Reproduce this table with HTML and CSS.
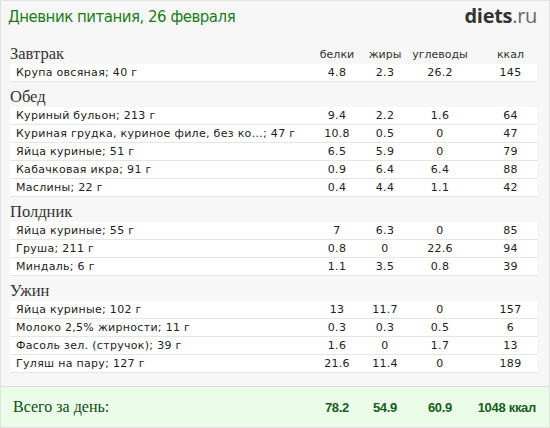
FILE: index.html
```html
<!DOCTYPE html>
<html lang="ru">
<head>
<meta charset="utf-8">
<link rel="stylesheet" href="styles.css">
</head>
<body>
<div class="widget">
  <div class="top">
    <div class="title">Дневник питания, 26 февраля</div>
    <div class="logo"><b>diets</b>.ru</div>
  </div>

  <div class="meal">
    <div class="head"><span class="mname">Завтрак</span><span>белки</span><span>жиры</span><span>углеводы</span><span class="last">ккал</span></div>
    <div class="row"><span class="name">Крупа овсяная; 40 г</span><span>4.8</span><span>2.3</span><span>26.2</span><span class="last">145</span></div>
  </div>

  <div class="meal">
    <div class="head"><span class="mname">Обед</span></div>
    <div class="row"><span class="name">Куриный бульон; 213 г</span><span>9.4</span><span>2.2</span><span>1.6</span><span class="last">64</span></div>
    <div class="row"><span class="name">Куриная грудка, куриное филе, без ко...; 47 г</span><span>10.8</span><span>0.5</span><span>0</span><span class="last">47</span></div>
    <div class="row"><span class="name">Яйца куриные; 51 г</span><span>6.5</span><span>5.9</span><span>0</span><span class="last">79</span></div>
    <div class="row"><span class="name">Кабачковая икра; 91 г</span><span>0.9</span><span>6.4</span><span>6.4</span><span class="last">88</span></div>
    <div class="row"><span class="name">Маслины; 22 г</span><span>0.4</span><span>4.4</span><span>1.1</span><span class="last">42</span></div>
  </div>

  <div class="meal">
    <div class="head"><span class="mname">Полдник</span></div>
    <div class="row"><span class="name">Яйца куриные; 55 г</span><span>7</span><span>6.3</span><span>0</span><span class="last">85</span></div>
    <div class="row"><span class="name">Груша; 211 г</span><span>0.8</span><span>0</span><span>22.6</span><span class="last">94</span></div>
    <div class="row"><span class="name">Миндаль; 6 г</span><span>1.1</span><span>3.5</span><span>0.8</span><span class="last">39</span></div>
  </div>

  <div class="meal">
    <div class="head"><span class="mname">Ужин</span></div>
    <div class="row"><span class="name">Яйца куриные; 102 г</span><span>13</span><span>11.7</span><span>0</span><span class="last">157</span></div>
    <div class="row"><span class="name">Молоко 2,5% жирности; 11 г</span><span>0.3</span><span>0.3</span><span>0.5</span><span class="last">6</span></div>
    <div class="row"><span class="name">Фасоль зел. (стручок); 39 г</span><span>1.6</span><span>0</span><span>1.7</span><span class="last">13</span></div>
    <div class="row"><span class="name">Гуляш на пару; 127 г</span><span>21.6</span><span>11.4</span><span>0</span><span class="last">189</span></div>
  </div>

  <div class="total">
    <span class="tname">Всего за день:</span><span>78.2</span><span>54.9</span><span>60.9</span><span class="last">1048 ккал</span>
  </div>
</div>
</body>
</html>
```

FILE: styles.css
```css
html, body {
  margin: 0;
  padding: 0;
  background: #fff;
}

.widget {
  width: 550px;
  height: 428px;
  box-sizing: border-box;
  border: 1px solid #e2e2e2;
  background: #f7f7f7;
  display: flex;
  flex-direction: column;
  font-family: "DejaVu Sans", Verdana, sans-serif;
}

.top {
  height: 38px;
  display: flex;
  justify-content: space-between;
  align-items: flex-start;
  padding: 0 12px 0 7px;
}

.title {
  font-size: 15px;
  color: #1a7d1a;
  line-height: 20px;
  padding-top: 6px;
  letter-spacing: -0.5px;
}

.logo {
  font-family: "Open Sans", sans-serif;
  font-size: 20px;
  color: #666;
  line-height: 24px;
  padding-top: 3px;
  letter-spacing: -0.3px;
}

.logo b {
  color: #333;
  font-weight: 700;
}

.meal {
  display: flex;
  flex-direction: column;
  padding: 0 12px 0 9px;
}

.head,
.row,
.total {
  display: grid;
  grid-template-columns: 1fr 48px 48px 62px 66px;
  align-items: center;
}

.head > span,
.row > span,
.total > span {
  text-align: center;
  white-space: nowrap;
}

.head > .last,
.row > .last {
  padding-left: 13px;
}

.total > .last {
  text-align: right;
  padding-right: 1px;
}

.head {
  height: 25px;
  align-items: end;
  font-size: 11px;
  color: #333;
  line-height: 18px;
}

.head > .mname {
  text-align: left;
  font-family: "Liberation Serif", "DejaVu Serif", serif;
  font-size: 16.5px;
  color: #333;
  line-height: 20px;
}

.row {
  height: 17px;
  background: #fff;
  border-bottom: 1px solid #e6e6e6;
  font-size: 11px;
  color: #222;
  line-height: 17px;
  letter-spacing: 0.3px;
}

.row > .name {
  text-align: left;
  padding-left: 6px;
}

.total {
  margin-top: auto;
  height: 40px;
  border-top: 1px solid #dcdcdc;
  background: #e9fde9;
  padding: 0 12px 0 9px;
  font-family: "Liberation Sans", Arial, sans-serif;
  font-weight: bold;
  font-size: 13px;
  color: #1a5e1a;
  letter-spacing: -0.3px;
}

.total > .tname {
  text-align: left;
  padding-left: 3px;
  font-family: "Liberation Serif", "DejaVu Serif", serif;
  font-weight: normal;
  font-size: 16px;
  color: #124d12;
  letter-spacing: 0;
}
```
